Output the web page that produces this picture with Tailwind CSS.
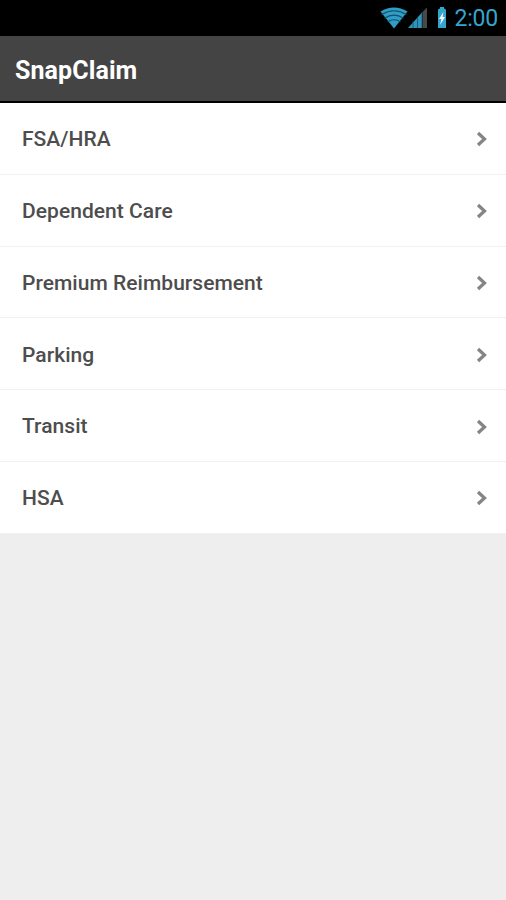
<!DOCTYPE html>
<html lang="en">
<head>
  <meta charset="UTF-8" />
  <meta name="viewport" content="width=device-width, initial-scale=1.0" />
  <title>SnapClaim</title>
  <script src="https://cdn.jsdelivr.net/npm/@tailwindcss/browser@4"></script>
</head>
<body class="h-screen overflow-hidden bg-[#eeeeee] font-['Roboto',sans-serif]">
  <!-- Status bar -->
  <div class="flex h-9 items-center justify-end bg-black pr-2 text-[#36a5cd]">
    <svg class="h-[22px] w-7" viewBox="0 0 28 22">
      <path d="M0.500 4.500Q14 -3.500 27.500 4.500L14 21.500Z" fill="#2f9dc5" />
      <path d="M1.500 7.500Q14 0 26.500 7.500M4.500 11.300Q14 5 23.500 11.300M7.500 15Q14 10.500 20.500 15" fill="none" stroke="#125068" stroke-width="1.100" />
    </svg>
    <svg class="h-[22px] w-5" viewBox="0 0 20 22">
      <path d="M0 21L14 5.500V21z" fill="#2f94ba" />
      <path d="M14.500 5L19 0.500V21H14.500z" fill="#484848" />
      <path d="M5 14v7M9.500 10v11M14 5v16" stroke="#174e63" stroke-width="0.800" />
    </svg>
    <svg class="ml-2.5 h-[22px] w-2" viewBox="0 0 8 22">
      <path d="M2 0h4v1.500q2 0 2 2V21H0V3.500q0-2 2-2z" fill="#36a5cd" />
      <path d="M5.500 5L1 12h2.500L2 18 7 10H4.500z" fill="#fff" />
    </svg>
    <span class="ml-2 pt-[3px] text-[23px] tracking-[-0.2px]">2:00</span>
  </div>

  <header class="flex h-[67px] items-center border-b-2 border-black bg-[#444444] px-[15px] pt-1">
    <h1 class="text-[25px] font-bold tracking-[0.1px] text-white">SnapClaim</h1>
  </header>

  <ul id="accounts" class="bg-white"></ul>

  <script>
    const accounts = ["FSA/HRA", "Dependent Care", "Premium Reimbursement", "Parking", "Transit", "HSA"];
    const list = document.getElementById("accounts");

    accounts.forEach((name) => {
      const row = document.createElement("li");
      row.className = "flex h-[71.8px] items-center justify-between border-b border-[#f1f1f1] pt-0.5 pr-[18px] pl-[22px] text-[21px] font-medium tracking-[0.04px] text-[#4d4d4d]";
      row.innerHTML = `<span class="pt-px">${name}</span>
        <svg class="h-4 w-3" viewBox="0 0 12 16" fill="none" stroke="#858585" stroke-width="3.300">
          <path d="M2 2L8.500 8 2 14" />
        </svg>`;
      list.appendChild(row);
    });
  </script>
</body>
</html>
